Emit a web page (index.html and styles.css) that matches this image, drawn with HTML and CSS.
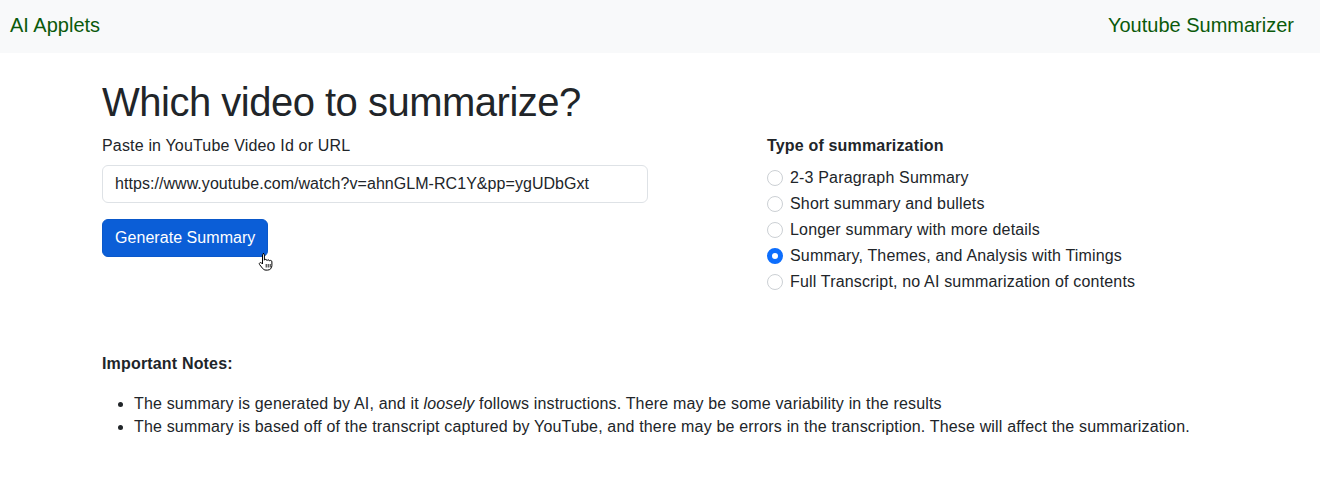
FILE: index.html
```html
<!DOCTYPE html>
<html lang="en">
<head>
<meta charset="utf-8">
<title>Youtube Summarizer</title>
<link rel="stylesheet" href="styles.css">
</head>
<body>
<nav class="navbar">
  <a class="brand" href="#">AI Applets</a>
  <a class="nav-title" href="#">Youtube Summarizer</a>
</nav>
<main class="container">
  <h1 class="title">Which video to summarize?</h1>
  <div class="row">
    <div class="col-left">
      <label class="form-label" for="vid">Paste in YouTube Video Id or URL</label>
      <input class="form-control" id="vid" type="text" value="https://www.youtube.com/watch?v=ahnGLM-RC1Y&amp;pp=ygUDbGxt">
      <div class="btn-wrap">
        <button class="btn" type="button">Generate Summary</button>
        <svg class="cursor" width="16" height="20" viewBox="0 0 16 20" aria-hidden="true">
          <path d="M5 1.5c.8 0 1.4.6 1.4 1.4v5.3c.2-.5.7-.8 1.3-.8.7 0 1.2.5 1.3 1.1.2-.4.7-.7 1.2-.7.7 0 1.2.5 1.3 1.1.2-.3.6-.5 1-.5.8 0 1.4.6 1.4 1.4v3.7c0 2.6-1.700 4.6-4.4 4.6H8c-1.5 0-2.5-.6-3.4-1.7l-3-3.8c-.5-.6-.4-1.4.2-1.8.6-.4 1.3-.3 1.8.2l.9 1V2.9c0-.8.6-1.4 1.5-1.4z" fill="#fff" stroke="#000" stroke-width="1"/>
          <path d="M8.2 12v3.5M10.2 12v3.5M12.2 12v3.5" stroke="#000" stroke-width="0.9"/>
        </svg>
      </div>
    </div>
    <div class="col-right">
      <div class="group-label">Type of summarization</div>
      <div class="form-check"><span class="radio"></span><span>2-3 Paragraph Summary</span></div>
      <div class="form-check"><span class="radio"></span><span>Short summary and bullets</span></div>
      <div class="form-check"><span class="radio"></span><span>Longer summary with more details</span></div>
      <div class="form-check"><span class="radio checked"></span><span>Summary, Themes, and Analysis with Timings</span></div>
      <div class="form-check"><span class="radio"></span><span>Full Transcript, no AI summarization of contents</span></div>
    </div>
  </div>
  <section class="notes">
    <p class="notes-title">Important Notes:</p>
    <ul class="notes-list">
      <li>The summary is generated by AI, and it <em>loosely</em> follows instructions. There may be some variability in the results</li>
      <li>The summary is based off of the transcript captured by YouTube, and there may be errors in the transcription. These will affect the summarization.</li>
    </ul>
  </section>
</main>
</body>
</html>
```

FILE: styles.css
```css
* { box-sizing: border-box; }
body {
  margin: 0;
  font-family: "Liberation Sans", Arial, sans-serif;
  font-size: 16px;
  line-height: 1.5;
  letter-spacing: 0.17px;
  color: #212529;
  background: #fff;
}
.navbar {
  height: 53px;
  background: #f8f9fa;
  display: flex;
  align-items: center;
  justify-content: space-between;
  padding: 0 26px 4px 10px;
}
.brand, .nav-title {
  color: #0b5a0b;
  font-size: 20px;
  letter-spacing: 0;
  text-decoration: none;
}
.container {
  width: 1140px;
  margin: 0 auto;
  padding: 0 12px;
}
.title {
  margin: 25px 0 8px;
  font-size: 40px;
  font-weight: 500;
  line-height: 1.2;
  letter-spacing: -0.5px;
}
.row {
  display: flex;
}
.col-left {
  width: 546px;
}
.col-right {
  margin-left: 119px;
}
.form-label {
  display: block;
  margin-bottom: 7px;
}
.form-control {
  display: block;
  width: 100%;
  height: 38px;
  padding: 6px 12px;
  font: inherit;
  letter-spacing: 0.05px;
  color: #212529;
  border: 1px solid #dee2e6;
  border-radius: 6px;
  background: #fff;
}
.btn-wrap {
  position: relative;
  margin-top: 16px;
}
.btn {
  height: 38px;
  padding: 6px 12px;
  font: inherit;
  letter-spacing: 0.05px;
  color: #fff;
  background: #0b5ed7;
  border: 1px solid #0a58ca;
  border-radius: 6px;
}
.cursor {
  position: absolute;
  left: 156px;
  top: 33px;
}
.group-label {
  font-weight: 700;
  margin-bottom: 8px;
}
.form-check {
  display: flex;
  align-items: center;
  min-height: 24px;
  margin-bottom: 2px;
}
.radio {
  width: 16px;
  height: 16px;
  border-radius: 50%;
  border: 1px solid #ccd0d4;
  margin-right: 7px;
  flex: none;
}
.radio.checked {
  border: 5px solid #0d6efd;
  background: #fff;
}
.notes {
  margin-top: 56px;
}
.notes-title {
  font-weight: 700;
  margin: 0 0 16px;
}
.notes-list {
  margin: 0;
  padding-left: 32px;
}
.notes-list li {
  line-height: 23px;
}
```
